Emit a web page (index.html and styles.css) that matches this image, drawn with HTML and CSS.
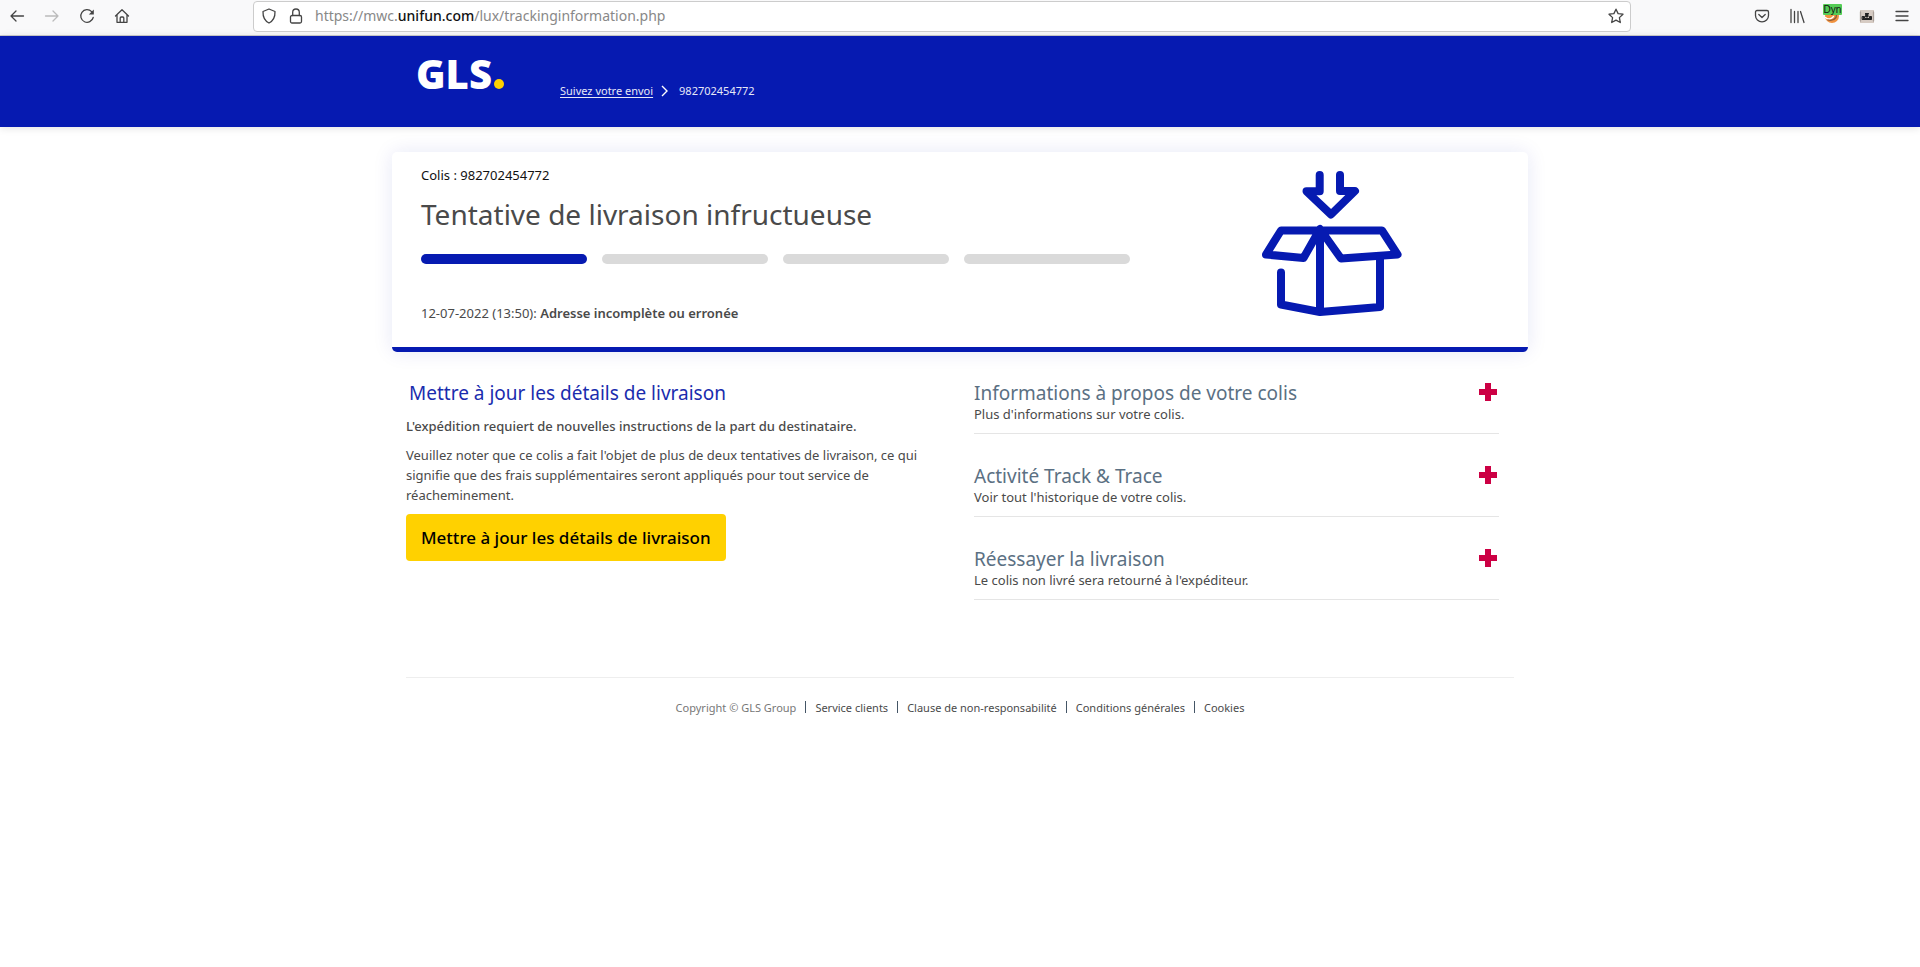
FILE: index.html
```html
<!DOCTYPE html>
<html lang="fr">
<head>
<meta charset="utf-8">
<title>GLS - Suivi de colis</title>
<link rel="stylesheet" href="styles.css">
</head>
<body>
<nav class="toolbar" aria-label="Navigateur">
  <div class="nav-buttons">
    <button class="tool" aria-label="Précédent"><svg viewBox="0 0 16 16"><path d="M14.500 8H2M7 3 2 8l5 5"/></svg></button>
    <button class="tool dim" aria-label="Suivant"><svg viewBox="0 0 16 16"><path d="M1.500 8H14M9 3l5 5-5 5"/></svg></button>
    <button class="tool" aria-label="Actualiser"><svg viewBox="0 0 16 16"><path d="M14.200 9.500A6.300 6.300 0 1 1 12.600 3.600"/><path d="M14.800 1.500v5H9.800z" fill="currentColor" stroke="none"/></svg></button>
    <button class="tool" aria-label="Accueil"><svg viewBox="0 0 16 16"><path d="M1.500 8 8 1.700 14.500 8M3 7V14.300h10V7M6.200 14v-4a1 1 0 0 1 1-1h1.600a1 1 0 0 1 1 1v4"/></svg></button>
  </div>
  <div class="address">
    <svg class="address-icon" viewBox="0 0 16 16"><path d="M8 1 14 3.500C14.200 9 12 13 8 15 4 13 1.800 9 2 3.500z"/></svg>
    <svg class="address-icon" viewBox="0 0 16 16"><rect x="2.500" y="7.500" width="11" height="7.500" rx="1.500"/><path d="M4.700 7.500V4.300a3.300 3.300 0 0 1 6.600 0v3.200"/></svg>
    <span class="url">https://mwc.<b>unifun.com</b>/lux/trackinginformation.php</span>
    <button class="tool" aria-label="Marque-page"><svg viewBox="0 0 16 16"><path d="m8 1.200 2.100 4.400 4.900.6-3.600 3.400.9 4.900L8 12.100l-4.300 2.400.9-4.900L1 6.200l4.900-.6z"/></svg></button>
  </div>
  <div class="extensions">
    <button class="tool" aria-label="Pocket"><svg viewBox="0 0 16 16"><path d="M3 2.500h10a1.500 1.500 0 0 1 1.500 1.500v3.500a6.500 6.300 0 0 1-13 0V4A1.500 1.500 0 0 1 3 2.500zM4.800 6.500 8 9.500l3.200-3"/></svg></button>
    <button class="tool" aria-label="Bibliothèque"><svg viewBox="0 0 16 16"><path d="M2 1.500v13M5.500 3.500v11M9 3.500v11M11.500 3.500l3.500 11"/></svg></button>
    <button class="tool ext" aria-label="Extension Dyn"><svg viewBox="0 0 16 16"><circle cx="8" cy="8" r="7" fill="#f0923f" stroke="none"/><path d="M1.500 9.500c2.500 2.500 6 1.500 8-1" stroke="#fff"/><path d="M4 12q5 1.500 8-2.500l.5-3" stroke="#8a5a3c"/></svg><span class="badge">Dyn</span></button>
    <button class="tool" aria-label="Extension"><svg viewBox="0 0 16 16"><path d="M1 2h14v13H1z" fill="#d6cbc3" stroke="none"/><path d="M1.500 4v9M14.500 4v9" stroke="#aaa09a"/><path d="M3.500 8.500h2v2h5v-2h2v3h-9zM7 5.500h2V9H7zM6.500 5.500h3" fill="#222" stroke="#222" stroke-width="1"/></svg></button>
    <button class="tool" aria-label="Menu"><svg viewBox="0 0 16 16"><path d="M2 3.500h12M2 8h12M2 12.500h12"/></svg></button>
  </div>
</nav>

<header class="site-header">
  <div class="container header-inner">
    <a class="logo" href="#" aria-label="GLS">GLS<span class="dot"></span></a>
    <div class="breadcrumb"><a href="#">Suivez votre envoi</a><svg class="chevron" viewBox="0 0 8 12"><path d="m1 1 5 5-5 5"/></svg><span>982702454772</span></div>
  </div>
</header>

<main class="container">
  <section class="status-card">
    <div class="status-text">
      <p class="parcel">Colis : 982702454772</p>
      <h1>Tentative de livraison infructueuse</h1>
      <div class="steps"><span class="step done"></span><span class="step"></span><span class="step"></span><span class="step"></span></div>
      <p class="event">12-07-2022 (13:50): <b>Adresse incomplète ou erronée</b></p>
    </div>
    <svg class="parcel-art" viewBox="0 0 140 146"><path d="M57.700 4V20.300H44.500L69 43.500 93 20H78V4"/><path d="M19 59.500H120L135.500 83.500 79 87.500 58 58 41.500 87 4 83.500z"/><path d="M58 60v81l60-5V88M58 141l-39-7.500V101.500"/></svg>
  </section>

  <div class="columns">
    <section class="update">
      <h2>Mettre à jour les détails de livraison</h2>
      <p class="lead">L'expédition requiert de nouvelles instructions de la part du destinataire.</p>
      <p class="note">Veuillez noter que ce colis a fait l'objet de plus de deux tentatives de livraison, ce qui signifie que des frais supplémentaires seront appliqués pour tout service de réacheminement.</p>
      <button class="cta">Mettre à jour les détails de livraison</button>
    </section>
    <section class="panels">
      <div class="panel"><div><h2>Informations à propos de votre colis</h2><p>Plus d'informations sur votre colis.</p></div><button class="plus" aria-label="Ouvrir les informations"></button></div>
      <div class="panel"><div><h2>Activité Track &amp; Trace</h2><p>Voir tout l'historique de votre colis.</p></div><button class="plus" aria-label="Ouvrir l'activité"></button></div>
      <div class="panel"><div><h2>Réessayer la livraison</h2><p>Le colis non livré sera retourné à l'expéditeur.</p></div><button class="plus" aria-label="Ouvrir la livraison"></button></div>
    </section>
  </div>

  <footer class="site-footer">
    <span class="copyright">Copyright © GLS Group</span>
    <a href="#">Service clients</a>
    <a href="#">Clause de non-responsabilité</a>
    <a href="#">Conditions générales</a>
    <a href="#">Cookies</a>
  </footer>
</main>
</body>
</html>
```
FILE: styles.css
```css
* { box-sizing: border-box; }
body { margin: 0; background: #fff; color: #4a4a4a; font: 13px/20px "Noto Sans", "Open Sans", sans-serif; }
h1, h2, p { margin: 0; font-weight: 400; }
button { border: 0; padding: 0; background: none; font: inherit; color: inherit; }
b { font-weight: 500; }

.toolbar { display: flex; align-items: center; height: 36px; padding-bottom: 3px; background: #f9f9fa; border-bottom: 1px solid #ccc; color: #444; }
.nav-buttons { display: flex; gap: 19px; padding-left: 9px; width: 253px; }
.tool { display: block; width: 16px; height: 16px; }
.tool svg, .address-icon { display: block; width: 16px; height: 16px; fill: none; stroke: currentColor; stroke-width: 1.3; stroke-linecap: round; stroke-linejoin: round; }
.dim { color: #bbb; }
.address { display: flex; align-items: center; gap: 11px; flex: 1; max-width: 1378px; height: 31px; padding: 0 6px 0 7px; background: #fff; border: 1px solid #ccc; border-radius: 4px; }
.url { flex: 1; font-size: 14px; color: #888; }
.url b { color: #111; }
.extensions { display: flex; gap: 19px; margin-left: auto; padding-right: 10px; }
.ext { position: relative; }
.badge { position: absolute; top: -4px; left: -1px; width: 19px; height: 11px; border-radius: 1px; background: #5c5; color: #111; font: 10px/11px "Liberation Sans", sans-serif; text-align: center; }

.container { width: 1136px; max-width: 100%; margin: 0 auto; }
.site-header { height: 91px; background: #061ab1; box-shadow: 0 1px 8px rgba(0, 0, 0, 0.12); }
.header-inner { display: flex; align-items: flex-start; padding-left: 24px; }
.logo { display: flex; align-items: baseline; width: 144px; padding-top: 18px; color: #fff; font: 900 40px/40px "Noto Sans", sans-serif; text-decoration: none; }
.dot { width: 10px; height: 10px; margin-left: 2px; border-radius: 50%; background: #ffd100; }
.breadcrumb { display: flex; align-items: center; padding-top: 45px; color: #e6e8f7; font-size: 11px; }
.breadcrumb a { color: inherit; text-underline-offset: 2px; }
.chevron { width: 8px; height: 12px; margin: 0 10px 0 8px; fill: none; stroke: #fff; stroke-width: 1.4; }

.status-card { display: flex; justify-content: space-between; margin-top: 25px; padding: 13px 126px 24px 29px; border-bottom: 5px solid #061ab1; border-radius: 5px; box-shadow: 0 0 20px rgba(6, 26, 177, 0.1); }
.status-text { flex: 0 1 709px; }
.parcel { color: #111; }
h1 { margin-top: 11px; font-size: 28px; line-height: 36px; }
.steps { display: grid; grid-template-columns: repeat(4, 1fr); gap: 15px; margin-top: 22px; }
.step { height: 10px; border-radius: 5px; background: #dadada; }
.done { background: #061ab1; }
.event { margin-top: 39px; }
.event b { font-weight: 600; }
.parcel-art { width: 140px; height: 146px; margin-top: 6px; fill: none; stroke: #061ab1; stroke-width: 8; stroke-linecap: round; stroke-linejoin: round; }

.columns { display: grid; grid-template-columns: 1fr 1fr; padding: 29px 14px 0; }
h2 { font-size: 19px; line-height: 24px; }
.update h2 { padding-left: 3px; color: #1a2cae; }
.lead { margin-top: 11px; font-weight: 500; }
.note { margin-top: 9px; }
.cta { height: 47px; margin-top: 9px; padding: 0 15px; border-radius: 4px; background: #ffd100; color: #000; font-size: 17px; font-weight: 500; }
.panels { display: grid; align-content: start; gap: 30px; padding: 0 15px 0 14px; }
.panel { display: flex; justify-content: space-between; padding-bottom: 10px; border-bottom: 1px solid #e5e5e5; }
.panel h2 { color: #5b7083; }
.panel p { line-height: 18px; }
.plus { width: 18px; height: 18px; margin: 2px 2px 0 0; background: linear-gradient(#cc0044, #cc0044) center / 18px 6px no-repeat, linear-gradient(#cc0044, #cc0044) center / 6px 18px no-repeat; }

.site-footer { display: flex; justify-content: center; margin: 77px 14px 0; padding-top: 20px; border-top: 1px solid #eee; font-size: 11px; }
.site-footer a { color: inherit; text-decoration: none; }
.site-footer a::before { content: ""; display: inline-block; width: 1px; height: 12px; margin: 0 9px; background: #456; vertical-align: -1px; }
.copyright { color: #777; }
```
